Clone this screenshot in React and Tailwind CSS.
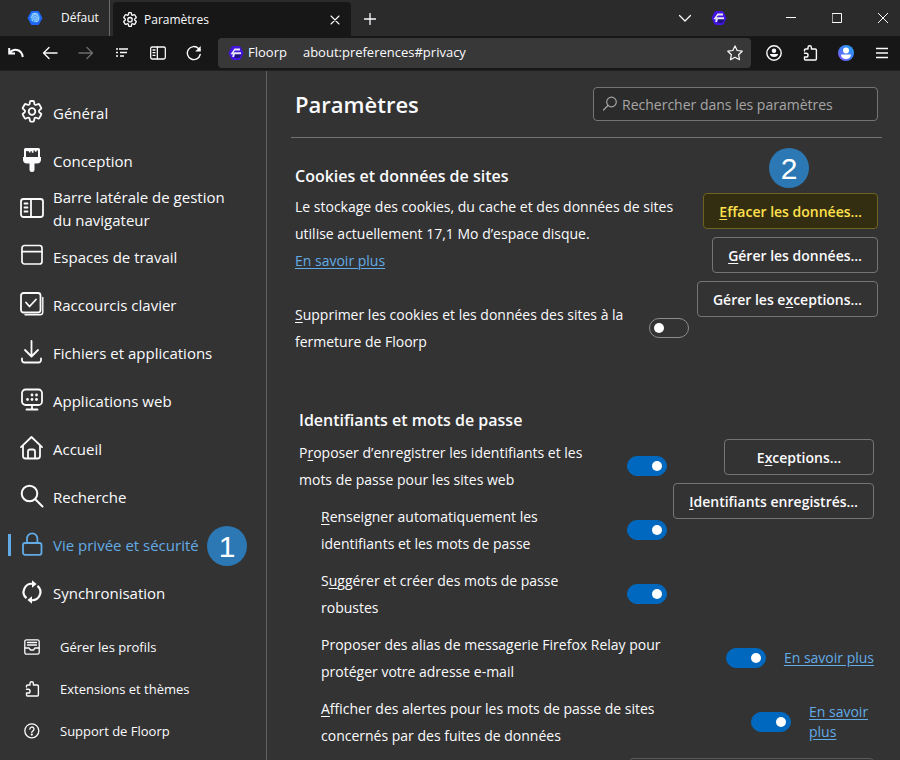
import React from "react";

const stroke = {
  fill: "none",
  stroke: "currentColor",
  strokeWidth: 1.5,
  strokeLinecap: "round",
  strokeLinejoin: "round",
};

function Svg({ className = "size-6", box = 24, children, ...rest }) {
  return (
    <svg viewBox={`0 0 ${box} ${box}`} className={`shrink-0 ${className}`} aria-hidden="true" {...stroke} {...rest}>
      {children}
    </svg>
  );
}

function GearIcon({ className, strokeWidth = 1.8 }) {
  return (
    <Svg className={className} strokeWidth={strokeWidth}>
      <path d="M9.9 1.9a1 1 0 0 1 1-.9h2.2a1 1 0 0 1 1 .9l.2 1.7a1.5 1.5 0 0 0 2.1 1.2l1.6-.7a1 1 0 0 1 1.3.4l1.9 3.3a1 1 0 0 1-.3 1.3l-1.400 1a1.500 1.500 0 0 0 0 2.400l1.400 1a1 1 0 0 1 .3 1.300l-1.900 3.300a1 1 0 0 1-1.300.4l-1.600-.7a1.500 1.500 0 0 0-2.100 1.200l-.2 1.700a1 1 0 0 1-1 .9h-2.200a1 1 0 0 1-1-.9l-.2-1.700a1.500 1.500 0 0 0-2.100-1.200l-1.600.7a1 1 0 0 1-1.300-.4l-1.900-3.300a1 1 0 0 1 .3-1.300l1.400-1a1.500 1.500 0 0 0 0-2.400l-1.400-1a1 1 0 0 1-.3-1.300l1.900-3.300a1 1 0 0 1 1.300-.4l1.600.7a1.500 1.500 0 0 0 2.100-1.200z" />
      <circle cx="12" cy="11.500" r="3.300" />
    </Svg>
  );
}

function BrushIcon() {
  return (
    <Svg>
      <path
        fillRule="evenodd"
        d="M4 1.500Q4 0 5.500 0h13Q20 0 20 1.500V9h1v2.500a4 4 0 0 1-4 4h-2.500v6a2.500 2.500 0 0 1-5 0v-6H7a4 4 0 0 1-4-4V9h1zM6 3v6h12V2.500h-1.500v1.300h-1.600V2.500h-1.400v2.300h-1.600V3.200h-1.400v1.300H9V3.200H7.800z"
        fill="currentColor"
        stroke="none"
      />
    </Svg>
  );
}

function PanelIcon({ className, strokeWidth = 1.8 }) {
  return (
    <Svg className={className} strokeWidth={strokeWidth}>
      <rect x="1" y="3" width="22" height="18" rx="2.500" />
      <path d="M11 3v18M4.500 7.500h3M4.500 11.500h3M4.500 15.500h3" />
    </Svg>
  );
}

function WorkspaceIcon() {
  return (
    <Svg strokeWidth="1.700">
      <rect x="2" y="1.500" width="20" height="18.500" rx="2.500" />
      <path d="M2 7.700h20" />
    </Svg>
  );
}

function ChecksIcon() {
  return (
    <Svg strokeWidth="1.800">
      <rect x="1" y="1" width="19.500" height="19.500" rx="2.500" />
      <path d="M6 10.500l3.500 4L16 7.500" />
      <path d="M22.800 5.500V20a2.800 2.800 0 0 1-2.800 2.800H5" strokeWidth="1.400" />
    </Svg>
  );
}

function DownloadIcon() {
  return (
    <Svg strokeWidth="1.800">
      <path d="M11.500 1v15M5 10l6.500 6.500L18 10M2 18.500v1.500a2.500 2.500 0 0 0 2.500 2.500h14A2.500 2.500 0 0 0 21 20v-1.500" />
    </Svg>
  );
}

function WebAppIcon() {
  return (
    <Svg strokeWidth="1.800">
      <rect x="2" y="1.500" width="20" height="15.500" rx="3.500" />
      <path d="M12 17v4.500M6.500 21.500h11" />
      <g fill="currentColor" stroke="none">
        <circle cx="12" cy="7" r="1.400" />
        <circle cx="16.500" cy="7" r="1.400" />
        <circle cx="7.500" cy="11.500" r="1.400" />
        <circle cx="12" cy="11.500" r="1.400" />
        <circle cx="16.500" cy="11.500" r="1.400" />
      </g>
    </Svg>
  );
}

function HomeIcon() {
  return (
    <Svg strokeWidth="1.800">
      <path d="M1 11.200L11.500 1 22 11.200" />
      <path d="M3 10v10a2.500 2.500 0 0 0 2.500 2.500h12A2.500 2.500 0 0 0 20 20V10M8 22v-6.500a2 2 0 0 1 2-2h3a2 2 0 0 1 2 2V22" />
    </Svg>
  );
}

function SearchIcon() {
  return (
    <Svg strokeWidth="2">
      <circle cx="9.500" cy="9.500" r="7.800" />
      <path d="M15.300 15.300L22.500 22.500" />
    </Svg>
  );
}

function LockIcon() {
  return (
    <Svg strokeWidth="1.800">
      <rect x="3" y="11" width="18.500" height="11.800" rx="2" />
      <path d="M7 11V6.500a5.200 5.200 0 0 1 10.400 0V11" />
    </Svg>
  );
}

function SyncIcon() {
  return (
    <Svg strokeWidth="2.200" strokeLinecap="butt">
      <path d="M12.500 3.800A8.200 8.200 0 0 0 6.500 18.200M11.500 20.200A8.200 8.200 0 0 0 17.500 5.800" />
      <path d="M12 .2l4.600 3.800L12 7.800zM12 16.200v7.600L7.400 20z" fill="currentColor" stroke="none" />
    </Svg>
  );
}

function ProfilesIcon() {
  return (
    <Svg className="size-4" box={16} strokeWidth="1.300">
      <rect x=".8" y=".8" width="14.400" height="14.400" rx="1.800" />
      <path d="M3.500 3.500h9M3.500 6h9M1 9h4l1.500 2h3L11 9h4" />
    </Svg>
  );
}

function PuzzleIcon() {
  return (
    <Svg className="size-4" box={16} strokeWidth="1.400">
      <path d="M2.500 6V5.200a1.200 1.200 0 0 1 1.200-1.200H6V2.500a1.700 1.700 0 0 1 3.400 0V4h3.800a1.200 1.200 0 0 1 1.200 1.200v8.600a1.200 1.200 0 0 1-1.200 1.200H3.700a1.200 1.200 0 0 1-1.200-1.200V12h1.700a1.500 1.500 0 0 0 0-3.700H2.500" />
    </Svg>
  );
}

function HelpIcon() {
  return (
    <Svg className="size-4" box={16} strokeWidth="1.300">
      <circle cx="7.800" cy="7.800" r="7" />
      <path d="M5.800 6.200a2.100 2.100 0 1 1 3.200 1.700c-.8.500-1.200.8-1.200 1.600" />
      <circle cx="7.800" cy="11.600" r=".5" fill="currentColor" />
    </Svg>
  );
}

function FloorpLogo() {
  return (
    <svg viewBox="0 0 16 16" className="size-4 shrink-0" aria-hidden="true">
      <path d="M5 1h6l1.500.8L15.500 8l-3 6.200L11 15H5l-1.500-.8L.5 8l3-6.200z" fill="#4415e0" />
      <path d="M7 9h6v2l-2 2H7z" fill="#20127c" />
      <path d="M6.500 3.500H12v2H7L5.500 7.200H13v2H6.800L6 12H4.200l.6-2.800H2.500z" fill="#e6e6f2" />
    </svg>
  );
}

function WorkspaceLogo() {
  return (
    <svg viewBox="0 0 16 16" className="size-4 shrink-0" fill="none" aria-hidden="true">
      <path d="M4.300 1h7.400L15.500 8l-3.800 7H4.300L.5 8z" fill="#1e66f5" />
      <circle cx="8" cy="7.500" r="5" fill="#3a98fa" />
      <g stroke="#c4e2ff" strokeWidth=".8">
        <path d="M4.500 8a3.500 3.500 0 0 1 7 0c0 2-.5 3-1 4M6 8.500a2 2 0 0 1 4 0c0 1.500-.3 2.500-.7 3.500M8 8v4M5 11c.5-.7.9-1.500 1-2.500" />
        <path d="M5 4.300c2-1.300 4-1.300 6 0" />
      </g>
    </svg>
  );
}

function AvatarIcon() {
  return (
    <svg viewBox="0 0 16 16" className="size-4 shrink-0" aria-hidden="true">
      <defs>
        <linearGradient id="avatar" x1="0" y1="1" x2="1" y2="0">
          <stop offset="0" stopColor="#9059ff" />
          <stop offset=".5" stopColor="#3f7cf5" />
          <stop offset="1" stopColor="#25a8ff" />
        </linearGradient>
      </defs>
      <circle cx="8" cy="8" r="8" fill="url(#avatar)" />
      <circle cx="8" cy="5.500" r="3" fill="#fff" />
      <path d="M3.200 9.500h9.600v1a4.800 3.500 0 0 1-9.600 0z" fill="#fff" />
    </svg>
  );
}

function BarButton({ label, className = "w-9", children }) {
  return (
    <button type="button" aria-label={label} className={`flex shrink-0 items-center justify-center ${className}`}>
      {children}
    </button>
  );
}

function TabStrip() {
  return (
    <div className="flex h-9 shrink-0 bg-[#2b2b2b]">
      <button type="button" className="flex w-[110px] items-center gap-[18px] border-r border-[#6b6b6b] pl-[27px] text-xs">
        <WorkspaceLogo />
        Défaut
      </button>
      <div className="mt-[2px] ml-[3px] flex w-[238px] items-center rounded-t bg-[#171717] pt-[2px] pr-[10px] pl-[9px] text-xs">
        <GearIcon className="size-4" strokeWidth={2} />
        <span className="ml-[6px] flex-1">Paramètres</span>
        <BarButton label="Fermer l’onglet" className="size-3">
          <Svg className="size-[10px]" box={10} strokeWidth="1.100">
            <path d="M1 1l8 8M9 1l-8 8" />
          </Svg>
        </BarButton>
      </div>
      <BarButton label="Nouvel onglet" className="w-[37px] pt-[2px]">
        <Svg className="size-3" box={12} strokeWidth="1.300">
          <path d="M6 .5v11M.5 6h11" />
        </Svg>
      </BarButton>
      <div className="ml-auto flex">
        <BarButton label="Lister tous les onglets" className="w-[34px]">
          <Svg className="size-3" box={12} strokeWidth="1.300">
            <path d="M.5 3.500L6 9l5.500-5.500" />
          </Svg>
        </BarButton>
        <BarButton label="Floorp" className="w-[34px]">
          <FloorpLogo />
        </BarButton>
        <BarButton label="Réduire" className="ml-8 w-[46px]">
          <Svg className="size-[10px]" box={10} strokeWidth="1" strokeLinecap="butt">
            <path d="M0 4.500h10" />
          </Svg>
        </BarButton>
        <BarButton label="Agrandir" className="w-[46px]">
          <Svg className="size-[10px]" box={10} strokeWidth="1">
            <rect x=".5" y=".5" width="9" height="9" />
          </Svg>
        </BarButton>
        <BarButton label="Fermer" className="w-10 pl-[6px]">
          <Svg className="size-[10px]" box={10} strokeWidth="1">
            <path d="M0 0l10 10M10 0L0 10" />
          </Svg>
        </BarButton>
      </div>
    </div>
  );
}

function Toolbar() {
  return (
    <div className="flex h-[35px] shrink-0 border-b border-[#222] bg-[#171717] py-[2px]">
      <BarButton label="Annuler la fermeture d’onglet" className="w-8">
        <Svg className="size-4" box={16} strokeWidth="2" strokeLinecap="butt" strokeLinejoin="miter">
          <path d="M1.200 3v5.500H7M1.500 8C5 3.500 13.500 3 14.800 12" />
        </Svg>
      </BarButton>
      <BarButton label="Reculer d’une page">
        <Svg className="size-4" box={16} strokeWidth="1.400">
          <path d="M15 8H1.500M7 2.500L1.500 8 7 13.500" />
        </Svg>
      </BarButton>
      <BarButton label="Avancer d’une page" className="w-9 text-[#6d6d6d]">
        <Svg className="size-4" box={16} strokeWidth="1.400">
          <path d="M1 8h13.500M9 2.500L14.500 8 9 13.500" />
        </Svg>
      </BarButton>
      <BarButton label="Arborescence d’onglets">
        <Svg className="size-4" box={16} strokeWidth="1.300" strokeLinecap="butt">
          <path d="M5 4h9M6 7.500h7M6 11h4M2 4h2M2 7.500h2M2 11h2" />
        </Svg>
      </BarButton>
      <BarButton label="Panneaux latéraux">
        <PanelIcon className="size-4" strokeWidth={1.900} />
      </BarButton>
      <BarButton label="Actualiser">
        <Svg className="size-4" box={16} strokeWidth="1.400">
          <path d="M14.200 9.500A6.500 6.500 0 1 1 12.500 3.500L14 5" />
          <path d="M14.700 1v5.500H9.200z" fill="currentColor" stroke="none" />
        </Svg>
      </BarButton>
      <div className="ml-[6px] flex min-w-0 flex-1 items-center rounded bg-[#383838] pr-2 pl-[10px] text-[13px]">
        <FloorpLogo />
        <span className="ml-[4px]">Floorp</span>
        <input
          type="text"
          aria-label="Adresse"
          defaultValue="about:preferences#privacy"
          className="ml-4 min-w-0 flex-1 bg-transparent outline-none"
        />
        <BarButton label="Ajouter un marque-page" className="size-4">
          <Svg className="size-4" box={16} strokeWidth="1.200">
            <path d="M8 .9l2.200 4.600 5 .7-3.600 3.500.9 5L8 12.300l-4.500 2.400.9-5L.8 6.200l5-.7z" />
          </Svg>
        </BarButton>
      </div>
      <BarButton label="Compte" className="ml-[5px] w-9">
        <Svg className="size-4" box={16} strokeWidth="1.400">
          <circle cx="8" cy="8" r="7.200" />
          <circle cx="8" cy="5.800" r="2.200" fill="currentColor" stroke="none" />
          <path d="M3.800 9h8.400a4.300 3.800 0 0 1-8.400 0z" fill="currentColor" stroke="none" />
        </Svg>
      </BarButton>
      <BarButton label="Extensions">
        <PuzzleIcon />
      </BarButton>
      <BarButton label="Profil">
        <AvatarIcon />
      </BarButton>
      <BarButton label="Menu">
        <Svg className="size-3" box={12} strokeWidth="1.300" strokeLinecap="butt">
          <path d="M0 1.500h12M0 6h12M0 10.500h12" />
        </Svg>
      </BarButton>
    </div>
  );
}

function Badge({ className, children }) {
  return (
    <span
      className={`absolute flex size-10 items-center justify-center rounded-full bg-[#2b78b4] font-['Liberation_Sans',Arial,sans-serif] text-[30px] text-white ${className}`}
    >
      {children}
    </span>
  );
}

const categories = [
  { label: "Général", icon: <GearIcon /> },
  { label: "Conception", icon: <BrushIcon /> },
  { label: "Barre latérale de gestion du navigateur", icon: <PanelIcon /> },
  { label: "Espaces de travail", icon: <WorkspaceIcon /> },
  { label: "Raccourcis clavier", icon: <ChecksIcon /> },
  { label: "Fichiers et applications", icon: <DownloadIcon /> },
  { label: "Applications web", icon: <WebAppIcon /> },
  { label: "Accueil", icon: <HomeIcon /> },
  { label: "Recherche", icon: <SearchIcon /> },
  { label: "Vie privée et sécurité", icon: <LockIcon />, active: true, badge: "1" },
  { label: "Synchronisation", icon: <SyncIcon /> },
];

const shortcuts = [
  { label: "Gérer les profils", icon: <ProfilesIcon /> },
  { label: "Extensions et thèmes", icon: <PuzzleIcon /> },
  { label: "Support de Floorp", icon: <HelpIcon /> },
];

function Sidebar() {
  return (
    <nav className="w-[267px] shrink-0 border-r border-[#626262] pt-[18px]">
      <ul>
        {categories.map((c) => (
          <li key={c.label} className="relative">
            <a
              href="#"
              className={`flex h-12 items-center pr-9 text-[15px] leading-[23px] ${c.active ? "text-[#62abe6]" : ""}`}
            >
              <span className={`ml-2 mr-[9px] h-[22px] w-[3px] shrink-0 ${c.active ? "bg-[#62abe6]" : ""}`} />
              <span className="pb-[2px]">{c.icon}</span>
              <span className="ml-[9px]">{c.label}</span>
            </a>
            {c.badge && <Badge className="top-[5px] left-[207px]">{c.badge}</Badge>}
          </li>
        ))}
      </ul>
      <ul className="mt-[10px]">
        {shortcuts.map((s) => (
          <li key={s.label}>
            <a href="#" className="flex h-[42px] items-center gap-5 pl-6 text-[13px]">
              <span className="pb-[2px]">{s.icon}</span>
              {s.label}
            </a>
          </li>
        ))}
      </ul>
    </nav>
  );
}

function Key({ children }) {
  return <span className="underline underline-offset-2">{children}</span>;
}

function Toggle({ id, on }) {
  return (
    <input
      id={id}
      type="checkbox"
      role="switch"
      defaultChecked={on}
      className="flex h-5 w-10 shrink-0 appearance-none items-center rounded-full border border-[#8c8c8c] px-[4px] before:size-[10px] before:rounded-full before:bg-white checked:justify-end checked:border-[#0069bf] checked:bg-[#0069bf]"
    />
  );
}

function Row({ id, on = true, indent, link, linkClass = "", children }) {
  return (
    <div className={`flex items-center ${indent ? "pl-[22px]" : ""}`}>
      <label htmlFor={id} className={`min-w-0 flex-1 ${link ? "pr-10" : "pr-4"}`}>
        {children}
      </label>
      <Toggle id={id} on={on} />
      {link && (
        <a href="#" className={`ml-[18px] shrink-0 leading-5 text-[#62abe6] underline underline-offset-2 ${linkClass}`}>
          {link}
        </a>
      )}
    </div>
  );
}

function PushButton({ className = "border-[#757575]", children }) {
  return (
    <button type="button" className={`h-9 rounded-sm border px-[15px] font-semibold whitespace-nowrap ${className}`}>
      {children}
    </button>
  );
}

export default function App() {
  return (
    <div className="flex h-screen flex-col overflow-hidden bg-[#333] font-['Open_Sans','Noto_Sans',sans-serif] text-[#fbfbfe]">
      <TabStrip />
      <Toolbar />
      <div className="flex min-h-0 flex-1">
        <Sidebar />
        <main className="min-w-0 flex-1 pr-[18px] pl-6 text-sm leading-[27px]">
          <header className="flex items-center justify-between border-b border-[#717171] px-1 py-4">
            <h1 className="text-[22px] font-semibold">Paramètres</h1>
            <label className="flex h-[34px] w-[285px] items-center gap-1 rounded border border-[#757575] bg-[#2b2b2b] px-2 text-[#a6a6a6]">
              <Svg className="size-4" box={16} strokeWidth="1.200">
                <circle cx="9.500" cy="6" r="4.800" />
                <path d="M6 9.500L1.500 14" />
              </Svg>
              <input
                type="search"
                aria-label="Rechercher dans les paramètres"
                placeholder="Rechercher dans les paramètres"
                className="min-w-0 flex-1 bg-transparent outline-none placeholder:text-[#a6a6a6]"
              />
            </label>
          </header>

          <section className="px-1 pt-[25px]">
            <h2 className="text-base leading-[27px] font-semibold">Cookies et données de sites</h2>
            <div className="mt-[3px] flex gap-2">
              <div className="min-w-0 flex-1">
                <p>
                  Le stockage des cookies, du cache et des données de sites utilise actuellement 17,1 Mo d’espace
                  disque.
                  <br />
                  <a href="#" className="text-[#62abe6] underline underline-offset-2">
                    En savoir plus
                  </a>
                </p>
                <div className="mt-[27px]">
                  <Row id="delete-on-close" on={false}>
                    <Key>S</Key>upprimer les cookies et les données des sites à la fermeture de Floorp
                  </Row>
                </div>
              </div>
              <div className="relative flex w-[181px] shrink-0 flex-col items-end gap-2">
                <Badge className="-top-[45px] left-[72px]">2</Badge>
                <PushButton className="border-[#6e6420] bg-[#332d12] text-[#ffe14d]">
                  <Key>E</Key>ffacer les données…
                </PushButton>
                <PushButton>
                  <Key>G</Key>érer les données…
                </PushButton>
                <PushButton>
                  Gérer les e<Key>x</Key>ceptions…
                </PushButton>
              </div>
            </div>
          </section>

          <section className="px-2 pt-[52px]">
            <h2 className="text-base leading-[27px] font-semibold">Identifiants et mots de passe</h2>
            <div className="mt-[5px] flex gap-2">
              <div className="flex min-w-0 flex-1 flex-col gap-[10px]">
                <Row id="save-logins">
                  P<Key>r</Key>oposer d’enregistrer les identifiants et les mots de passe pour les sites web
                </Row>
                <Row id="autofill" indent>
                  <Key>R</Key>enseigner automatiquement les identifiants et les mots de passe
                </Row>
                <Row id="suggest" indent>
                  S<Key>u</Key>ggérer et créer des mots de passe robustes
                </Row>
              </div>
              <div className="flex w-[199px] shrink-0 flex-col items-end gap-2">
                <PushButton className="w-[150px] border-[#757575]">
                  E<Key>x</Key>ceptions…
                </PushButton>
                <PushButton>
                  <Key>I</Key>dentifiants enregistrés…
                </PushButton>
              </div>
            </div>
            <div className="mt-[10px] flex flex-col gap-[10px]">
              <Row id="relay" indent link="En savoir plus">
                Proposer des alias de messagerie Firefox Relay pour protéger votre adresse e-mail
              </Row>
              <Row id="breach" indent link="En savoir plus" linkClass="w-[65px]">
                <Key>A</Key>fficher des alertes pour les mots de passe de sites concernés par des fuites de données
              </Row>
            </div>
            <div className="mt-[9px] flex justify-end">
              <button
                type="button"
                aria-label="Mot de passe principal"
                className="h-9 w-[245px] rounded-sm border border-[#5a5a5a]"
              />
            </div>
          </section>
        </main>
      </div>
    </div>
  );
}
